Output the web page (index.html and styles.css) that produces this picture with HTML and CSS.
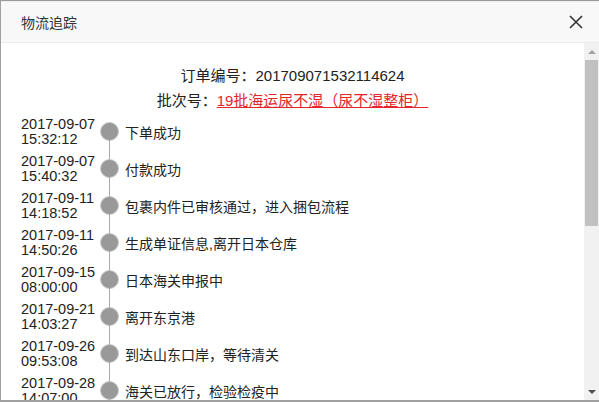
FILE: index.html
```html
<!DOCTYPE html>
<html lang="zh-CN">

  <head>
    <meta charset="UTF-8">
    <title>物流追踪</title>
    <link rel="stylesheet" href="styles.css">
  </head>

  <body>
    <div class="dialog">
      <div class="dialog-head">
        <span class="dialog-title">物流追踪</span>
        <span class="dialog-close">
          <svg width="14" height="14" viewBox="0 0 14 14">
            <path d="M1 1 L13 13 M13 1 L1 13" stroke="#333" stroke-width="1.6" fill="none" />
          </svg>
        </span>
      </div>

      <div class="dialog-body">
        <div class="content">
          <p class="order">订单编号：201709071532114624</p>
          <p class="order">批次号：<a href="#" class="batch">19批海运尿不湿（尿不湿整柜）</a></p>

          <ul class="track">
            <li>
              <div class="time">2017-09-07<br>15:32:12</div>
              <div class="node"></div>
              <div class="msg">下单成功</div>
            </li>
            <li>
              <div class="time">2017-09-07<br>15:40:32</div>
              <div class="node"></div>
              <div class="msg">付款成功</div>
            </li>
            <li>
              <div class="time">2017-09-11<br>14:18:52</div>
              <div class="node"></div>
              <div class="msg">包裹内件已审核通过，进入捆包流程</div>
            </li>
            <li>
              <div class="time">2017-09-11<br>14:50:26</div>
              <div class="node"></div>
              <div class="msg">生成单证信息,离开日本仓库</div>
            </li>
            <li>
              <div class="time">2017-09-15<br>08:00:00</div>
              <div class="node"></div>
              <div class="msg">日本海关申报中</div>
            </li>
            <li>
              <div class="time">2017-09-21<br>14:03:27</div>
              <div class="node"></div>
              <div class="msg">离开东京港</div>
            </li>
            <li>
              <div class="time">2017-09-26<br>09:53:08</div>
              <div class="node"></div>
              <div class="msg">到达山东口岸，等待清关</div>
            </li>
            <li>
              <div class="time">2017-09-28<br>14:07:00</div>
              <div class="node"></div>
              <div class="msg">海关已放行，检验检疫中</div>
            </li>
          </ul>
        </div>

        <!-- 滚动条 -->
        <div class="scrollbar">
          <div class="arrow up"></div>
          <div class="thumb"></div>
          <div class="rest"></div>
          <div class="arrow down"></div>
        </div>
      </div>
    </div>
  </body>

</html>
```

FILE: styles.css
```css
* {
  box-sizing: border-box;
  font-family: 'Liberation Sans', 'Noto Sans CJK SC', sans-serif;
}

body {
  margin: 0;
  overflow: hidden;
}

.dialog {
  width: 599px;
  height: 402px;
  border-top: 1px solid #9a9a9a;
  border-left: 1px solid #a0a0a0;
  border-bottom: 2px solid #a0a0a0;
  display: flex;
  flex-direction: column;
  background: #fff;
}

.dialog-head {
  height: 42px;
  flex: none;
  background: #f8f8f8;
  border-top: 1px solid #eee;
  border-bottom: 1px solid #ececec;
  display: flex;
  align-items: center;
  justify-content: space-between;
  padding: 0 16px 0 20px;
}

.dialog-title {
  font-size: 14px;
  color: #333;
}

.dialog-close {
  display: flex;
  width: 14px;
  height: 14px;
}

.dialog-body {
  flex: 1;
  display: flex;
  overflow: hidden;
}

.content {
  flex: 1;
  overflow: hidden;
  padding-top: 20px;
  color: #222;
}

.order {
  margin: 0;
  text-align: center;
  font-size: 15px;
  line-height: 25px;
}

.batch {
  color: #e4262b;
  text-decoration: underline;
}

.track {
  list-style: none;
  margin: 0;
  padding: 0 0 0 20px;
}

.track li {
  height: 37px;
  display: flex;
  align-items: center;
}

.time {
  width: 79px;
  font-size: 14.5px;
  line-height: 15px;
  color: #222;
}

.node {
  width: 19px;
  height: 19px;
  border-radius: 50%;
  background: #999;
  border: 1px solid #c8c8c8;
  position: relative;
  flex: none;
}

/* 连接线 */
.node::after {
  content: '';
  position: absolute;
  left: 8px;
  top: 17px;
  width: 1px;
  height: 20px;
  background: #aaa;
}

.msg {
  margin-left: 6px;
  font-size: 14px;
  color: #222;
}

.scrollbar {
  width: 15px;
  flex: none;
  background: #f1f1f1;
  display: flex;
  flex-direction: column;
}

.arrow {
  height: 17px;
  flex: none;
  display: flex;
  align-items: center;
  justify-content: center;
}

.arrow::before {
  content: '';
  border-left: 4px solid transparent;
  border-right: 4px solid transparent;
}

.arrow.up::before {
  border-bottom: 4px solid #a3a3a3;
}

.arrow.down::before {
  border-top: 4px solid #505050;
}

.thumb {
  height: 166px;
  margin: 0 1px 0 1px;
  background: #c1c1c1;
}

.rest {
  flex: 1;
}
```
